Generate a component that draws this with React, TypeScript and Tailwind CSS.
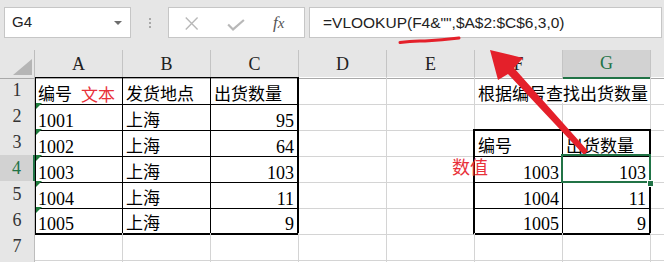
import React from "react";

const COLS = ["A", "B", "C", "D", "E", "F", "G"];

type CellData = { text: string; align?: "left" | "right"; num?: boolean; tri?: boolean };

const DATA: Record<number, Record<number, CellData>> = {
  1: {
    0: { text: "编号" },
    1: { text: "发货地点" },
    2: { text: "出货数量" },
    5: { text: "根据编号查找出货数量" },
  },
  2: { 0: { text: "1001", num: true, tri: true }, 1: { text: "上海" }, 2: { text: "95", align: "right", num: true } },
  3: {
    0: { text: "1002", num: true, tri: true },
    1: { text: "上海" },
    2: { text: "64", align: "right", num: true },
    5: { text: "编号" },
    6: { text: "出货数量" },
  },
  4: {
    0: { text: "1003", num: true, tri: true },
    1: { text: "上海" },
    2: { text: "103", align: "right", num: true },
    5: { text: "1003", align: "right", num: true },
    6: { text: "103", align: "right", num: true },
  },
  5: {
    0: { text: "1004", num: true, tri: true },
    1: { text: "上海" },
    2: { text: "11", align: "right", num: true },
    5: { text: "1004", align: "right", num: true },
    6: { text: "11", align: "right", num: true },
  },
  6: {
    0: { text: "1005", num: true, tri: true },
    1: { text: "上海" },
    2: { text: "9", align: "right", num: true },
    5: { text: "1005", align: "right", num: true },
    6: { text: "9", align: "right", num: true },
  },
};

function rightBorder(r: number, c: number): string {
  if (r >= 1 && r <= 6 && c <= 2) return c === 2 ? "border-r-2 border-r-black" : "border-r border-r-black";
  if (r >= 3 && r <= 6) {
    if (c === 4) return "border-r-2 border-r-black";
    if (c === 5) return "border-r border-r-black";
    if (c === 6) return "border-r-2 border-r-black";
  }
  if (r === 1 && c === 5) return "border-r border-r-transparent";
  return "border-r border-r-[#d4d4d4]";
}

function bottomBorder(r: number, c: number): string {
  if (r >= 1 && r <= 6 && c <= 2) return r === 6 ? "border-b-2 border-b-black" : "border-b border-b-black";
  if (r === 2 && c >= 5) return "border-b-2 border-b-black";
  if (r >= 3 && r <= 6 && c >= 5) return r === 6 ? "border-b-2 border-b-black" : "border-b border-b-black";
  return "border-b border-b-[#d4d4d4]";
}

function topLeftShadow(r: number, c: number): string {
  if (r === 1 && c === 0) return "shadow-[inset_1px_1px_0_#000]";
  if (r === 1 && c <= 2) return "shadow-[inset_0_1px_0_#000]";
  if (r >= 2 && r <= 6 && c === 0) return "shadow-[inset_1px_0_0_#000]";
  return "";
}

function Cell({ r, c }: { r: number; c: number }) {
  const d = DATA[r]?.[c];
  const selected = r === 4 && c === 6;
  return (
    <div
      className={[
        "relative box-border h-full flex items-end whitespace-nowrap leading-[18px]",
        rightBorder(r, c),
        bottomBorder(r, c),
        topLeftShadow(r, c),
        d?.align === "right" ? "justify-end pr-[3px]" : "justify-start pl-[3px]",
        d?.num ? "text-[18px]" : "text-[17px]",
      ].join(" ")}
    >
      {d?.tri && (
        <span className="absolute top-0 left-px w-0 h-0 border-t-[6px] border-r-[6px] border-t-[#1e7b3c] border-r-transparent" />
      )}
      {d && <span className="relative">{d.text}</span>}
      {selected && (
        <>
          <span className="absolute -top-px -left-[2px] -right-[2px] -bottom-px border-2 border-[#217346] z-10" />
          <span className="absolute -right-[5px] -bottom-[5px] w-[7px] h-[7px] bg-[#217346] border border-white z-20" />
        </>
      )}
    </div>
  );
}

function RowHeader({ r }: { r: number }) {
  const sel = r === 4;
  return (
    <div
      className={[
        "box-border h-full flex items-center justify-center text-[18px] border-b border-b-[#c8c8c8]",
        sel
          ? "bg-[#d2d2d2] text-[#217346] border-r-2 border-r-[#217346]"
          : "bg-[#e6e6e6] text-[#333] border-r border-r-[#bdbdbd]",
      ].join(" ")}
    >
      {r <= 7 ? r : ""}
    </div>
  );
}

export default function App() {
  const rows = [1, 2, 3, 4, 5, 6, 7, 8];
  return (
    <div
      className="relative w-[664px] h-[262px] overflow-hidden bg-white text-black"
      style={{ fontFamily: '"Liberation Serif", "Noto Sans CJK SC", serif' }}
    >
      {/* Formula bar */}
      <div className="flex h-[50px] bg-[#e6e6e6] pt-[7px] pl-[4px] pr-[2px] items-start font-['Liberation_Sans',sans-serif]">
        <div className="w-[127px] h-[31px] box-border bg-white border border-[#c6c6c6] flex items-center justify-between pl-[7px] pr-[8px]">
          <span className="text-[15px] text-[#222]">G4</span>
          <span className="w-0 h-0 border-l-[4px] border-r-[4px] border-t-[4px] border-l-transparent border-r-transparent border-t-[#6d6d6d]" />
        </div>
        <div className="w-[37px] h-[31px] flex flex-col items-center justify-center gap-[2px]">
          <span className="w-[2px] h-[2px] bg-[#a8a8a8]" />
          <span className="w-[2px] h-[2px] bg-[#a8a8a8]" />
          <span className="w-[2px] h-[2px] bg-[#a8a8a8]" />
        </div>
        <div className="relative w-[137px] h-[31px] box-border bg-white border border-[#c6c6c6] flex items-center">
          <svg width="137" height="29" viewBox="0 0 137 29" className="block">
            <path d="M17 9.5 L29 21.5 M29 9.5 L17 21.5" stroke="#b8b8b8" strokeWidth="1.4" fill="none" />
            <path d="M60 16.5 L65 21.5 L76 12" stroke="#b8b8b8" strokeWidth="2.2" fill="none" />
          </svg>
          <span className="absolute left-[104px] top-[6px] text-[17px] italic text-[#555] font-['Liberation_Serif',serif] leading-none">
            f<span className="text-[15px]">x</span>
          </span>
        </div>
        <div className="ml-[4px] flex-1 h-[31px] box-border bg-white border border-[#c6c6c6] flex items-center pl-[13px]">
          <span className="text-[15.5px] text-[#222] whitespace-nowrap">=VLOOKUP(F4&amp;"",$A$2:$C$6,3,0)</span>
        </div>
      </div>

      {/* Column headers */}
      <div className="grid grid-cols-[35px_repeat(7,88px)_1fr] h-[27px] bg-[#e6e6e6]">
        <div className="relative box-border h-full border-r border-r-[#bdbdbd] border-b border-b-[#a9a9a9]">
          <svg className="absolute right-[2px] bottom-[3px]" width="19" height="16" viewBox="0 0 19 16">
            <polygon points="19,0 19,16 0,16" fill="#b5b5b5" />
          </svg>
        </div>
        {COLS.map((L, i) => (
          <div
            key={L}
            className={[
              "box-border h-full flex items-center justify-center text-[18px] border-r border-r-[#c4c4c4]",
              i === 6
                ? "bg-[#d2d2d2] text-[#217346] border-b-2 border-b-[#217346]"
                : "text-[#222] border-b border-b-[#a9a9a9]",
            ].join(" ")}
          >
            {L}
          </div>
        ))}
        <div className="box-border h-full border-b border-b-[#a9a9a9]" />
      </div>

      {/* Rows */}
      {rows.map((r) => (
        <div key={r} className="grid grid-cols-[35px_repeat(7,88px)_1fr] h-[26px]">
          <RowHeader r={r} />
          {COLS.map((_, c) => (
            <Cell key={c} r={r} c={c} />
          ))}
          <div className="box-border h-full border-b border-b-[#d4d4d4]" />
        </div>
      ))}

      {/* Annotations */}
      <span className="absolute left-[81px] top-[85px] text-[17px] leading-none text-[#e8313a] font-['Noto_Sans_CJK_SC',sans-serif]">
        文本
      </span>
      <span className="absolute left-[452px] top-[157px] text-[18px] leading-none text-[#e8313a] font-['Noto_Sans_CJK_SC',sans-serif]">
        数值
      </span>
      <svg className="absolute left-0 top-0 pointer-events-none" width="664" height="262" viewBox="0 0 664 262">
        <path d="M400 42.5 Q412 40.5 425 41 Q442 40 459 38" stroke="#e4202a" strokeWidth="3" strokeLinecap="round" fill="none" />
        <polygon points="490,50 523,58 514,68 588,151 584,155 508,74 498,80" fill="#e4202a" />
      </svg>
    </div>
  );
}
